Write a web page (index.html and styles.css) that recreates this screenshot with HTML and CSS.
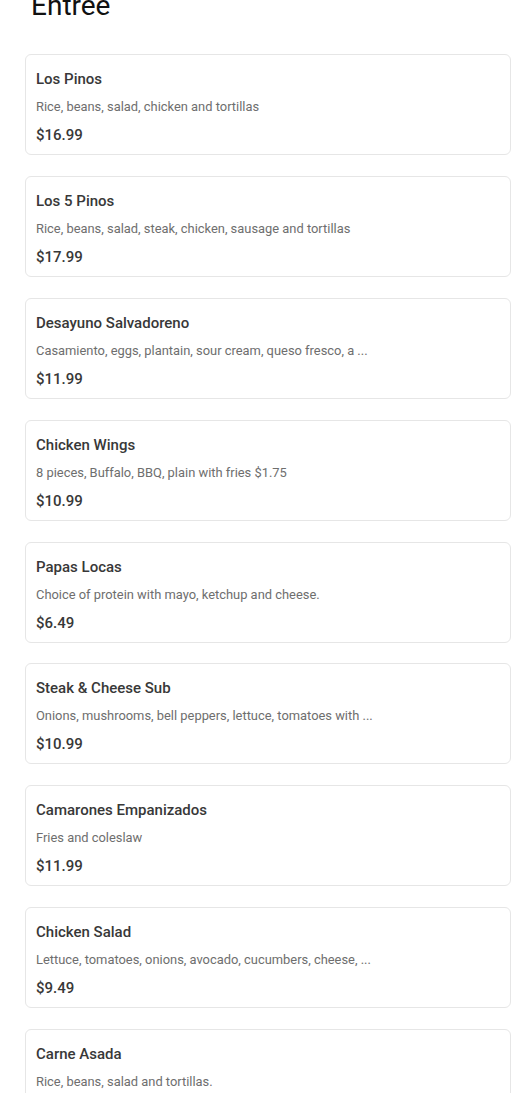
FILE: index.html
```html
<!DOCTYPE html>
<html>
<head>
    <title>Entree</title>
    <link rel="stylesheet" href="styles.css">
</head>
<body>
    <div class="menu">
        <h2 class="section-title">Entree</h2>

        <div class="items">
            <div class="item">
                <div class="item-name">Los Pinos</div>
                <div class="item-desc">Rice, beans, salad, chicken and tortillas</div>
                <div class="item-price">$16.99</div>
            </div>
            <div class="item">
                <div class="item-name">Los 5 Pinos</div>
                <div class="item-desc">Rice, beans, salad, steak, chicken, sausage and tortillas</div>
                <div class="item-price">$17.99</div>
            </div>
            <div class="item">
                <div class="item-name">Desayuno Salvadoreno</div>
                <div class="item-desc">Casamiento, eggs, plantain, sour cream, queso fresco, a ...</div>
                <div class="item-price">$11.99</div>
            </div>
            <div class="item">
                <div class="item-name">Chicken Wings</div>
                <div class="item-desc">8 pieces, Buffalo, BBQ, plain with fries $1.75</div>
                <div class="item-price">$10.99</div>
            </div>
            <div class="item">
                <div class="item-name">Papas Locas</div>
                <div class="item-desc">Choice of protein with mayo, ketchup and cheese.</div>
                <div class="item-price">$6.49</div>
            </div>
            <div class="item">
                <div class="item-name">Steak &amp; Cheese Sub</div>
                <div class="item-desc">Onions, mushrooms, bell peppers, lettuce, tomatoes with ...</div>
                <div class="item-price">$10.99</div>
            </div>
            <div class="item">
                <div class="item-name">Camarones Empanizados</div>
                <div class="item-desc">Fries and coleslaw</div>
                <div class="item-price">$11.99</div>
            </div>
            <div class="item">
                <div class="item-name">Chicken Salad</div>
                <div class="item-desc">Lettuce, tomatoes, onions, avocado, cucumbers, cheese, ...</div>
                <div class="item-price">$9.49</div>
            </div>
            <div class="item">
                <div class="item-name">Carne Asada</div>
                <div class="item-desc">Rice, beans, salad and tortillas.</div>
                <div class="item-price">$12.99</div>
            </div>
        </div>
    </div>
</body>
</html>
```

FILE: styles.css
```css
body {
    margin: 0;
    background: #fff;
    font-family: Roboto, "Liberation Sans", sans-serif;
    color: #333;
    overflow: hidden;
}
.menu {
    padding: 0 19px 0 25px;
}
.section-title {
    margin: -11px 0 31px 6px;
    font-size: 28px;
    line-height: 34px;
    font-weight: 400;
    color: #111;
}
.items {
    display: flex;
    flex-direction: column;
    gap: 20.875px;
}
.item {
    border: 1px solid #e6e6e6;
    border-radius: 6px;
    padding: 13px 10px 8px;
    background: #fff;
}
.item-name {
    font-size: 15px;
    line-height: 22px;
    font-weight: 500;
    color: #383838;
}
.item-desc {
    margin-top: 8px;
    font-size: 12.9px;
    line-height: 18px;
    color: #6e6e6e;
}
.item-price {
    margin-top: 8px;
    font-size: 15px;
    line-height: 22px;
    font-weight: 500;
    color: #383838;
}
```
